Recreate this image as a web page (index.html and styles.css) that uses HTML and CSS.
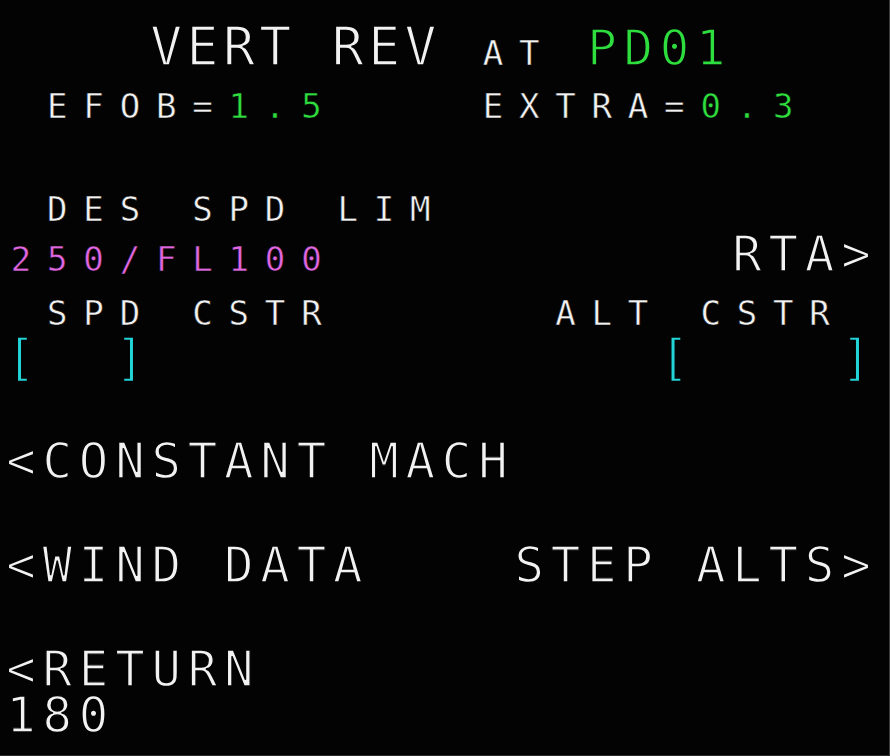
FILE: index.html
```html
<!doctype html>
<html>

<head>
  <meta charset="utf-8">
  <title>MCDU - VERT REV</title>
  <link rel="stylesheet" href="styles.css">
</head>

<body>

  <div class="mcdu">
    <div class="row title">
      <div><span class="t">    VERT REV</span><span class="s"> AT </span><span class="l green">PD01</span></div>
    </div>

    <div class="row lbl">
      <div><span class="s"> EFOB=</span><span class="s green">1.5</span></div>
      <div><span class="s">EXTRA=</span><span class="s green">0.3  </span></div>
    </div>
    <div class="row dat"></div>

    <div class="row lbl">
      <div><span class="s"> DES SPD LIM</span></div>
    </div>
    <div class="row dat">
      <div><span class="s magenta">250/FL100</span></div>
      <div><span class="l">RTA&gt;</span></div>
    </div>

    <div class="row lbl">
      <div><span class="s"> SPD CSTR</span></div>
      <div><span class="s">ALT CSTR </span></div>
    </div>
    <div class="row dat">
      <div><span class="l cyan">[  ]</span></div>
      <div><span class="l cyan">[    ]</span></div>
    </div>

    <div class="row lbl"></div>
    <div class="row dat">
      <div><span class="l">&lt;CONSTANT MACH</span></div>
    </div>

    <div class="row lbl"></div>
    <div class="row dat">
      <div><span class="l">&lt;WIND DATA</span></div>
      <div><span class="l">STEP ALTS&gt;</span></div>
    </div>

    <div class="row lbl"></div>
    <div class="row dat ret">
      <div><span class="l">&lt;RETURN</span></div>
    </div>

    <div class="row scratch">
      <div><span class="l">180</span></div>
    </div>
  </div>

</body>

</html>
```

FILE: styles.css
```css
* {
  margin: 0;
  box-sizing: border-box;
}

html,
body {
  width: 100%;
  height: 100%;
  background: #030303;
  overflow: hidden;
}

/* 24 columns of 36.3px, every glyph size gets the same cell */
.mcdu {
  width: 890px;
  height: 756px;
  padding: 25px 0 0 6.25px;
  border-right: 1px solid #3c3c3c;
  border-bottom: 1px solid #2a2a2a;
  font-family: "DejaVu Sans Mono", monospace;
  color: #f2f2f2;
}

.row {
  width: 871.2px;
  display: flex;
  justify-content: space-between;
  align-items: baseline;
  line-height: 44px;
  white-space: pre;
}

.title {
  height: 58.7px;
  font-size: 53px;
}

.lbl {
  height: 46px;
  font-size: 34px;
}

.dat {
  height: 57.6px;
  font-size: 49px;
}

.ret {
  height: 46px;
}

.scratch {
  font-size: 49px;
}

.t,
.l,
.s {
  display: inline-block;
}

/* black stroke over the fill thins the glyphs down to the MCDU line weight */
/* title size */
.t {
  font-size: 53px;
  letter-spacing: 4.4px;
  margin-left: -1.2px;
  margin-right: 1.2px;
  -webkit-text-stroke: 1.4px #030303;
}

/* large size */
.l {
  font-size: 49px;
  letter-spacing: 6.8px;
  -webkit-text-stroke: 1.4px #030303;
}

/* small size, nudged so the glyph sits in the middle of its cell */
.s {
  font-size: 34px;
  letter-spacing: 15.83px;
  margin-left: 4.5px;
  margin-right: -4.5px;
  -webkit-text-stroke: 0.5px #030303;
}

.green {
  color: #2ede3e;
}

.magenta {
  color: #e066e0;
}

.cyan {
  color: #22d4d8;
}
```
